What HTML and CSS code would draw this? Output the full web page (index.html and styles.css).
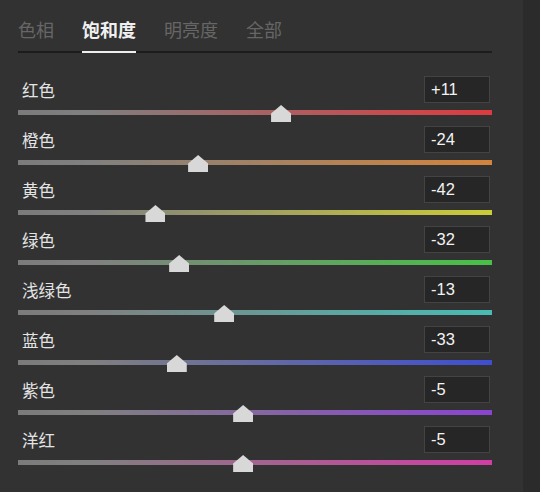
FILE: index.html
```html
<!DOCTYPE html>
<html lang="zh">
<head>
<meta charset="utf-8">
<link rel="stylesheet" href="styles.css">
</head>
<body>
<div class="app">
  <div class="panel">
    <div class="tabs">
      <div class="tab">色相</div>
      <div class="tab active">饱和度</div>
      <div class="tab">明亮度</div>
      <div class="tab">全部</div>
    </div>
    <div class="rows">
      <div class="row">
        <div class="head"><span class="label">红色</span><div class="val">+11</div></div>
        <div class="track red"><span class="thumb" style="left:55.5%"></span></div>
      </div>
      <div class="row">
        <div class="head"><span class="label">橙色</span><div class="val">-24</div></div>
        <div class="track orange"><span class="thumb" style="left:38%"></span></div>
      </div>
      <div class="row">
        <div class="head"><span class="label">黄色</span><div class="val">-42</div></div>
        <div class="track yellow"><span class="thumb" style="left:29%"></span></div>
      </div>
      <div class="row">
        <div class="head"><span class="label">绿色</span><div class="val">-32</div></div>
        <div class="track green"><span class="thumb" style="left:34%"></span></div>
      </div>
      <div class="row">
        <div class="head"><span class="label">浅绿色</span><div class="val">-13</div></div>
        <div class="track aqua"><span class="thumb" style="left:43.5%"></span></div>
      </div>
      <div class="row">
        <div class="head"><span class="label">蓝色</span><div class="val">-33</div></div>
        <div class="track blue"><span class="thumb" style="left:33.5%"></span></div>
      </div>
      <div class="row">
        <div class="head"><span class="label">紫色</span><div class="val">-5</div></div>
        <div class="track purple"><span class="thumb" style="left:47.5%"></span></div>
      </div>
      <div class="row">
        <div class="head"><span class="label">洋红</span><div class="val">-5</div></div>
        <div class="track magenta"><span class="thumb" style="left:47.5%"></span></div>
      </div>
    </div>
  </div>
  <div class="strip"></div>
</div>
</body>
</html>
```
FILE: styles.css
```css
* { box-sizing: border-box; }
html, body {
  margin: 0;
  padding: 0;
  background: #323232;
  font-family: "Noto Sans CJK SC", "Noto Sans", sans-serif;
}
.app {
  display: flex;
  width: 540px;
  height: 492px;
  overflow: hidden;
}
.panel {
  width: 523px;
  padding: 17px 31px 0 18px;
  background: #323232;
}
.strip {
  flex: 1;
  background: #2b2b2b;
}
.tabs {
  display: flex;
  gap: 28px;
  border-bottom: 2px solid #1c1c1c;
}
.tab {
  font-size: 18px;
  line-height: 24px;
  color: #666666;
  padding-bottom: 10px;
  margin-bottom: -2px;
  border-bottom: 2px solid transparent;
}
.tab.active {
  color: #f0f0f0;
  font-weight: 700;
  border-bottom-color: #eeeeee;
}
.rows {
  margin-top: 23px;
  display: flex;
  flex-direction: column;
}
.row {
  height: 50px;
  display: flex;
  flex-direction: column;
}
.head {
  height: 27px;
  display: flex;
  align-items: center;
  justify-content: space-between;
  padding-left: 4px;
  padding-right: 2px;
}
.label {
  font-size: 16.5px;
  color: #e4e4e4;
  line-height: 20px;
}
.val {
  width: 66px;
  height: 27px;
  background: #262626;
  border: 1px solid #434343;
  color: #f2f2f2;
  font-family: "Liberation Sans", Arial, sans-serif;
  font-size: 16.5px;
  line-height: 25px;
  padding-left: 6px;
}
.track {
  position: relative;
  margin-top: 7px;
  height: 5px;
  background: linear-gradient(90deg, #7b7b7b 0%, #808080 15%, var(--c));
}
.red { --c: #dc3b3f; }
.orange { --c: #d4843c; }
.yellow { --c: #cccc38; }
.green { --c: #48c048; }
.aqua { --c: #48bcb4; }
.blue { --c: #3f4ed0; }
.purple { --c: #8a44d0; }
.magenta { --c: #d03ea4; }
.thumb {
  position: absolute;
  top: -5px;
  width: 20px;
  height: 17px;
  margin-left: -10px;
  background: #d8d8d8;
  clip-path: polygon(50% 0, 100% 50%, 100% 100%, 0 100%, 0 50%);
}
```
